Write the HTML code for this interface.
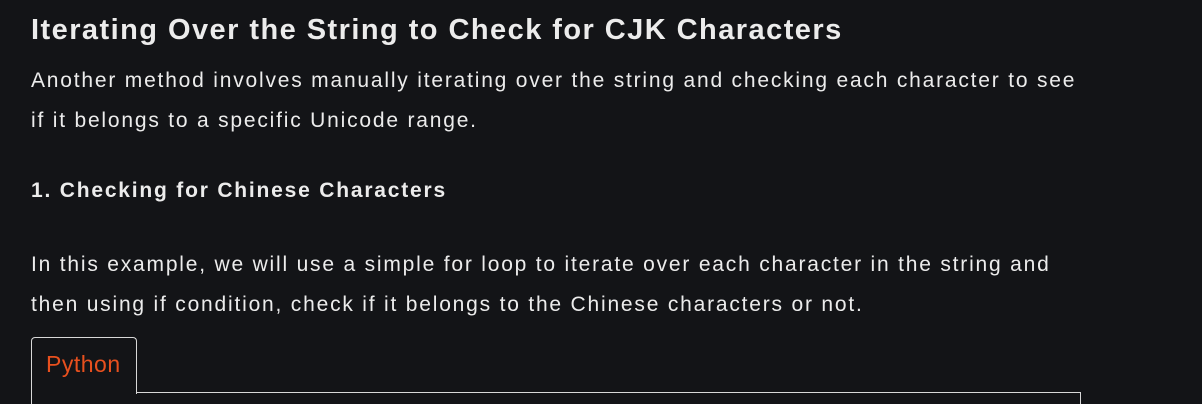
<!DOCTYPE html>
<html><head><style>
html,body{margin:0;overflow:hidden}
body{background:#131417;width:1202px;height:404px;font-family:"Liberation Sans",sans-serif;color:#ececec;position:relative}
.a{position:absolute;left:31px;white-space:nowrap}
h1{position:absolute;left:31px;top:14px;margin:0;font-size:29px;font-weight:bold;letter-spacing:1.45px;white-space:nowrap}
p{margin:0;font-size:21px;line-height:40px;letter-spacing:1.8px}
.tab{position:absolute;left:31px;top:337px;width:104px;height:56px;border:1px solid #d8d8d8;border-bottom:none;border-radius:4px 4px 0 0;background:#131417;z-index:2}
.tab span{position:absolute;left:14px;top:13px;color:#e8501e;font-size:23px;letter-spacing:0.5px}
.box{position:absolute;left:31px;top:392px;width:1048px;height:11px;border:1px solid #d8d8d8;border-bottom:none}
</style></head><body>
<h1>Iterating Over the String to Check for CJK Characters</h1>
<p class="a" style="top:61px">Another method involves manually iterating over the string and checking each character to see<br>if it belongs to a specific Unicode range.</p>
<div class="a" style="top:179px;font-size:21px;font-weight:bold;letter-spacing:1.8px">1. Checking for Chinese Characters</div>
<p class="a" style="top:245px">In this example, we will use a simple for loop to iterate over each character in the string and<br>then using if condition, check if it belongs to the Chinese characters or not.</p>
<div class="box"></div>
<div class="tab"><span>Python</span></div>
</body></html>
